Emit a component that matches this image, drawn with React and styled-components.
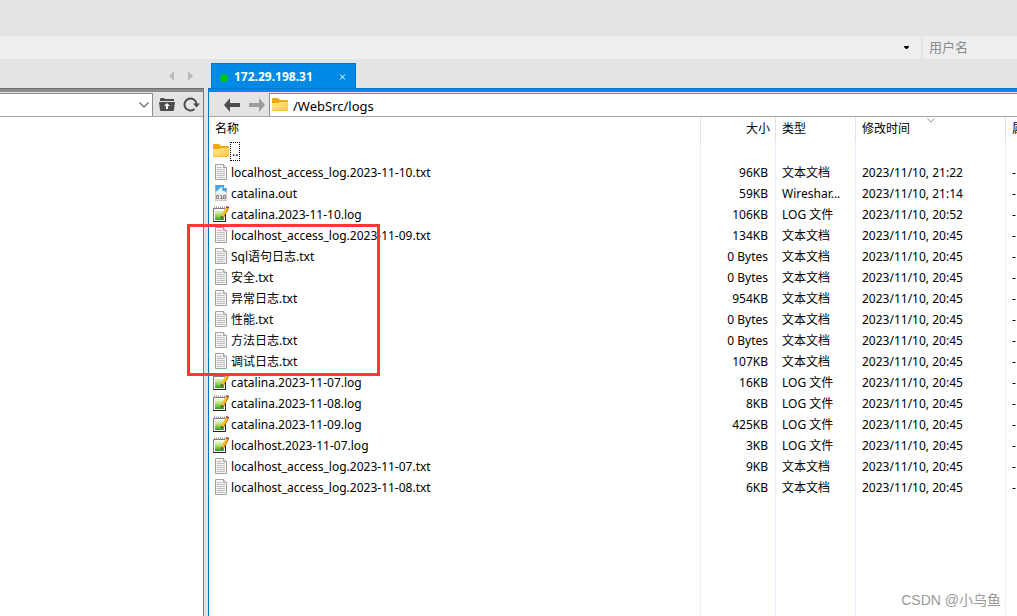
import React from 'react'
import styled, { createGlobalStyle } from 'styled-components'

const GlobalStyle = createGlobalStyle`
  * {
    box-sizing: border-box;
  }
  body {
    margin: 0;
    background: #e4e4e4;
    color: #000;
    font-family: 'Noto Sans', 'Noto Sans CJK SC', sans-serif;
    font-size: 12px;
    line-height: 16px;
  }
  button, input, select {
    font: inherit;
    color: inherit;
  }
`
const Window = styled.div`
  position: relative;
  display: flex;
  flex-direction: column;
  height: 100vh;
  overflow: hidden;
`
const SessionBar = styled.header`
  display: flex;
  gap: 2px;
  margin-top: 36px;
`
const HostBox = styled.div`
  display: flex;
  align-items: center;
  flex: 1;
  height: 23px;
  padding-right: 12px;
  background: #eee;
`
const PlainSelect = styled.select`
  flex: 1;
  min-width: 0;
  height: 100%;
  border: 0;
  outline: 0;
  background: transparent;
  appearance: none;
`
const UserInput = styled.input`
  width: 94px;
  height: 23px;
  padding: 0 6px 2px;
  border: 0;
  border-radius: 0;
  background: #eee;
  font-size: 13px;
  &::placeholder {
    color: #8c8c8c;
  }
`
const Panes = styled.main`
  display: flex;
  flex: 1;
  gap: 4px;
  min-height: 0;
`
const Pane = styled.section`
  position: relative;
  display: flex;
  flex-direction: column;
  flex: ${props => (props.$local ? '0 0 204px' : '1')};
  min-width: 0;
`
const TabStrip = styled.div`
  display: flex;
  align-items: ${props => (props.$arrows ? 'center' : 'flex-end')};
  justify-content: ${props => (props.$arrows ? 'flex-end' : 'flex-start')};
  gap: 12px;
  height: 29px;
  padding: ${props => (props.$arrows ? '4px 9px 0 0' : '0 3px')};
`
const PaneBody = styled.div`
  display: flex;
  flex: 1;
  flex-direction: column;
  min-height: 0;
  overflow: hidden;
  border-top: 1px solid ${props => (props.$active ? '#0078c8' : '#6e6e6e')};
  border-left: ${props => (props.$active ? '1px solid #0078c8' : '0')};
  border-right: ${props => (props.$active ? '0' : '1px solid #777')};
  &::before {
    content: '';
    flex: none;
    height: 3px;
    background: ${props => (props.$active ? '#008ae6' : '#8c8c8c')};
  }
`
const IconButton = styled.button`
  display: flex;
  align-items: center;
  justify-content: center;
  padding: 0;
  border: 0;
  background: none;
  color: ${props => props.$color || '#4d4d4d'};
`
const Tab = styled.div`
  display: flex;
  align-items: center;
  width: 145px;
  height: 25px;
  padding: 2px 8px 0 8px;
  border: 1px solid #0078c8;
  border-bottom: 0;
  background: #008ae6;
  color: #fff;
  font-weight: bold;
`
const Dot = styled.span`
  width: 8px;
  height: 8px;
  margin: 1px 6px 0 0;
  border-radius: 50%;
  background: #00c314;
`
const TabTitle = styled.span`
  flex: 1;
`
const PathBar = styled.div`
  display: flex;
  flex: none;
  height: 25px;
  padding-top: 1px;
  border-bottom: 1px solid #a9a9a9;
  background: #e4e4e4;
`
const PathField = styled.div`
  display: flex;
  align-items: center;
  flex: 1;
  min-width: 0;
  gap: 5px;
  padding: 0 3px 0 2px;
  border: 1px solid #8c8c8c;
  border-bottom: 0;
  border-left-width: ${props => (props.$local ? '0' : '1px')};
  border-right-width: ${props => (props.$local ? '1px' : '0')};
  background: #fff;
  color: #666;
`
const PathInput = styled.input`
  flex: 1;
  min-width: 0;
  height: 22px;
  padding: 1px 0 0;
  border: 0;
  outline: 0;
  background: transparent;
  color: #000;
  font-size: 13px;
`
const Tools = styled.div`
  display: flex;
  align-items: center;
  gap: 8px;
  padding: ${props => props.$pad};
`
const Listing = styled.div`
  flex: 1;
  min-height: 0;
  overflow: hidden;
  background: #fff;
`
const Table = styled.table`
  width: 100%;
  height: 100%;
  table-layout: fixed;
  border-collapse: separate;
  border-spacing: 0;
  th:last-child, td:last-child {
    border-right: 0;
  }
`
const Col = styled.col`
  width: ${props => props.$width || 'auto'};
`
const HeadCell = styled.th`
  position: relative;
  height: 24px;
  padding: ${props => (props.$right ? '0 5px' : '0 6px')};
  border-right: 1px solid #e2e2e2;
  font-weight: normal;
  text-align: ${props => (props.$right ? 'right' : 'left')};
  white-space: nowrap;
`
const SortMark = styled.span`
  position: absolute;
  top: 1px;
  left: 0;
  right: 0;
  display: flex;
  justify-content: center;
  color: #8c8c8c;
`
const Cell = styled.td`
  height: 21px;
  padding: ${props => (props.$name ? '0 4px' : '1px 7px 0 6px')};
  border-right: 1px solid #e8f1fb;
  text-align: ${props => (props.$right ? 'right' : 'left')};
  white-space: nowrap;
`
const Filler = styled.tr`
  height: auto;
  td {
    height: auto;
  }
`
const FileName = styled.div`
  display: flex;
  align-items: center;
  gap: 2px;
  height: 21px;
  svg {
    flex: none;
    margin-bottom: 2px;
  }
`
const Focused = styled.span`
  margin-left: -1px;
  padding: 1px 1px 0;
  border: 1px dotted #000;
`
const Highlight = styled.div`
  position: absolute;
  top: 165px;
  left: -21px;
  width: 193px;
  height: 152px;
  border: 3px solid #ff3636;
  pointer-events: none;
`
const Watermark = styled.div`
  position: absolute;
  right: 16px;
  bottom: 6px;
  color: #9a9a9a;
  font-family: 'Liberation Sans', 'Noto Sans CJK SC', sans-serif;
  font-size: 14px;
  line-height: 20px;
`

const Triangle = ({ flip }) => (
  <svg width='8' height='10' viewBox='0 0 8 10'>
    <path d={flip ? 'M1 0L6 5L1 10Z' : 'M7 0L2 5L7 10Z'} fill='#b9b9b9' />
  </svg>
)

const FolderIcon = () => (
  <svg width='16' height='14' viewBox='0 0 16 14'>
    <defs>
      <linearGradient id='folder' x1='0' y1='0' x2='1' y2='1'>
        <stop offset='0' stopColor='#ffe596' />
        <stop offset='1' stopColor='#ffc83c' />
      </linearGradient>
    </defs>
    <path d='M0 1Q0 0 1 0H6L8 2H15Q16 2 16 3V7H0Z' fill='#f0a90c' />
    <path d='M0 5H6L8 4H16V12Q16 13 15 13H1Q0 13 0 12Z' fill='url(#folder)' />
    <path d='M0.5 12.5H15.5' stroke='#f3bd3d' />
  </svg>
)

const TextIcon = () => (
  <svg width='16' height='16' viewBox='0 0 16 16'>
    <path d='M2.500 0.500H10.500L13.500 3.500V15.500H2.500Z' fill='#f5f5f5' stroke='#a0a0a0' />
    <path d='M10.500 0.500V3.500H13.500' fill='#e4e4e4' stroke='#a0a0a0' />
    <path d='M4 3.500H9M4 5.500H12M4 7.500H12M4 9.500H12M4 11.500H12M4 13.500H12' stroke='#bdbdbd' />
  </svg>
)

const CaptureIcon = () => (
  <svg width='16' height='16' viewBox='0 0 16 16'>
    <path d='M2 0H11L14 3V16H2Z' fill='#e6e4e0' />
    <path d='M2 0H11L14 3V8H2Z' fill='#4aa8dc' />
    <path d='M2 7Q5 6 6 4Q7 2 10 2Q8 4 10 6L14 7V9H2Z' fill='#e9f6fd' />
    <path d='M11 0L14 3H11Z' fill='#fff' />
    <path d='M3.500 10.500H5.500V13.500H3.500ZM10.500 10.500H12.500V13.500H10.500ZM7 10.500H8.500V14M7 13.500H10' fill='none' stroke='#8b857f' />
    <path d='M2.500 0V15.500H13.500V3' fill='none' stroke='#b4bcc2' strokeOpacity='0.6' />
  </svg>
)

const LogIcon = () => (
  <svg width='16' height='16' viewBox='0 0 16 16'>
    <defs>
      <linearGradient id='pad' x1='0' y1='0' x2='0' y2='1'>
        <stop offset='0' stopColor='#f4fbe4' />
        <stop offset='0.5' stopColor='#a8dc5c' />
        <stop offset='1' stopColor='#2f9a20' />
      </linearGradient>
    </defs>
    <path d='M0.500 2.500H12.500V15.500H0.500Z' fill='#fff' stroke='#777' />
    <path d='M2 4H11V14H2Z' fill='url(#pad)' />
    <path d='M1.500 0.500V3M3.500 0.500V3M5.500 0.500V3M7.500 0.500V3M9.500 0.500V3M11.500 0.500V3' stroke='#999' strokeDasharray='2 1' />
    <path d='M0 15.500H12.500V8' fill='none' stroke='#222' />
    <path d='M14.500 2L9.500 11' stroke='#b87412' strokeWidth='3' />
    <path d='M14 2L9.300 10.500' stroke='#ffc31f' strokeWidth='2' />
    <path d='M13 0L16 1V2.500L13 1.500Z' fill='#a42b2b' />
    <path d='M8.300 10L10.500 11L8 13Z' fill='#444' />
  </svg>
)

const ArrowIcon = ({ flip }) => (
  <svg width='17' height='14' viewBox='0 0 17 14'>
    <path d={flip ? 'M16 7L10 0V5H0V9H10V14Z' : 'M0 7L6 0V5H16V9H6V14Z'} fill='currentColor' />
  </svg>
)

const FolderUpIcon = () => (
  <svg width='16' height='13' viewBox='0 0 16 13'>
    <path d='M1 2V1Q1 0 2 0H5L6 1H15V3H1Z' fill='currentColor' />
    <path d='M0 4H16L15 12Q15 13 14 13H2Q1 13 1 12Z' fill='currentColor' />
    <path d='M8 5L11 8H9V11H7V8H5Z' fill='#fff' />
  </svg>
)

const RefreshIcon = () => (
  <svg width='17' height='15' viewBox='0 0 17 15'>
    <path d='M11.500 12A6 6 0 1 1 13.500 7' fill='none' stroke='currentColor' strokeWidth='2' />
    <path d='M10 6.500H17L13.500 10.500Z' fill='currentColor' />
  </svg>
)

const Chevron = ({ width, height }) => (
  <svg width={width} height={height} viewBox='0 0 10 6'>
    <path d='M0.500 0.500L5 5L9.500 0.500' fill='none' stroke='currentColor' strokeWidth='1.200' />
  </svg>
)

const icons = { txt: TextIcon, out: CaptureIcon, log: LogIcon }

const files = [
  ['localhost_access_log.2023-11-10.txt', '96KB', '文本文档', '21:22'],
  ['catalina.out', '59KB', 'Wireshar...', '21:14'],
  ['catalina.2023-11-10.log', '106KB', 'LOG 文件', '20:52'],
  ['localhost_access_log.2023-11-09.txt', '134KB', '文本文档', '20:45'],
  ['Sql语句日志.txt', '0 Bytes', '文本文档', '20:45'],
  ['安全.txt', '0 Bytes', '文本文档', '20:45'],
  ['异常日志.txt', '954KB', '文本文档', '20:45'],
  ['性能.txt', '0 Bytes', '文本文档', '20:45'],
  ['方法日志.txt', '0 Bytes', '文本文档', '20:45'],
  ['调试日志.txt', '107KB', '文本文档', '20:45'],
  ['catalina.2023-11-07.log', '16KB', 'LOG 文件', '20:45'],
  ['catalina.2023-11-08.log', '8KB', 'LOG 文件', '20:45'],
  ['catalina.2023-11-09.log', '425KB', 'LOG 文件', '20:45'],
  ['localhost.2023-11-07.log', '3KB', 'LOG 文件', '20:45'],
  ['localhost_access_log.2023-11-07.txt', '9KB', '文本文档', '20:45'],
  ['localhost_access_log.2023-11-08.txt', '6KB', '文本文档', '20:45']
]

const FileRow = ({ file }) => {
  const [name, size, type, time] = file
  const Icon = icons[name.split('.').pop()]
  return (
    <tr>
      <Cell $name><FileName><Icon />{name}</FileName></Cell>
      <Cell $right>{size}</Cell>
      <Cell>{type}</Cell>
      <Cell>2023/11/10, {time}</Cell>
      <Cell>-</Cell>
    </tr>
  )
}

const FileTable = () => (
  <Table>
    <colgroup>
      <Col $width='492px' />
      <Col $width='75px' />
      <Col $width='80px' />
      <Col $width='150px' />
      <Col />
    </colgroup>
    <thead>
      <tr>
        <HeadCell>名称</HeadCell>
        <HeadCell $right>大小</HeadCell>
        <HeadCell>类型</HeadCell>
        <HeadCell>
          修改时间
          <SortMark><Chevron width='8' height='5' /></SortMark>
        </HeadCell>
        <HeadCell>属</HeadCell>
      </tr>
    </thead>
    <tbody>
      <tr>
        <Cell $name><FileName><FolderIcon /><Focused>..</Focused></FileName></Cell>
        <Cell />
        <Cell />
        <Cell />
        <Cell />
      </tr>
      {files.map(file => <FileRow key={file[0]} file={file} />)}
      <Filler>
        <Cell />
        <Cell />
        <Cell />
        <Cell />
        <Cell />
      </Filler>
    </tbody>
  </Table>
)

const App = () => (
  <>
    <GlobalStyle />
    <Window>
      <SessionBar>
        <HostBox>
          <PlainSelect aria-label='Host' />
          <svg width='5' height='3' viewBox='0 0 5 3'><path d='M0 0H5V1L3 3H2L0 1Z' /></svg>
        </HostBox>
        <UserInput aria-label='用户名' placeholder='用户名' />
      </SessionBar>
      <Panes>
        <Pane $local>
          <TabStrip $arrows>
            <IconButton aria-label='Previous tab'><Triangle /></IconButton>
            <IconButton aria-label='Next tab'><Triangle flip /></IconButton>
          </TabStrip>
          <PaneBody>
            <PathBar>
              <PathField $local>
                <PlainSelect aria-label='Local path' />
                <Chevron width='10' height='6' />
              </PathField>
              <Tools $pad='0 3px 0 6px'>
                <IconButton aria-label='Parent folder'><FolderUpIcon /></IconButton>
                <IconButton aria-label='Refresh'><RefreshIcon /></IconButton>
              </Tools>
            </PathBar>
            <Listing />
          </PaneBody>
        </Pane>
        <Pane>
          <TabStrip>
            <Tab>
              <Dot />
              <TabTitle>172.29.198.31</TabTitle>
              <IconButton aria-label='Close tab' $color='#fff'>
                <svg width='8' height='8' viewBox='0 0 8 8'>
                  <path d='M1 1.500L6 6.500M6 1.500L1 6.500' stroke='currentColor' />
                </svg>
              </IconButton>
            </Tab>
          </TabStrip>
          <PaneBody $active>
            <PathBar>
              <Tools $pad='0 3px 0 15px'>
                <IconButton aria-label='Back'><ArrowIcon /></IconButton>
                <IconButton aria-label='Forward' $color='#9c9c9c'><ArrowIcon flip /></IconButton>
              </Tools>
              <PathField>
                <FolderIcon />
                <PathInput aria-label='Remote path' defaultValue='/WebSrc/logs' />
              </PathField>
            </PathBar>
            <Listing>
              <FileTable />
            </Listing>
          </PaneBody>
          <Highlight />
        </Pane>
      </Panes>
      <Watermark>CSDN @小乌鱼</Watermark>
    </Window>
  </>
)

export default App
